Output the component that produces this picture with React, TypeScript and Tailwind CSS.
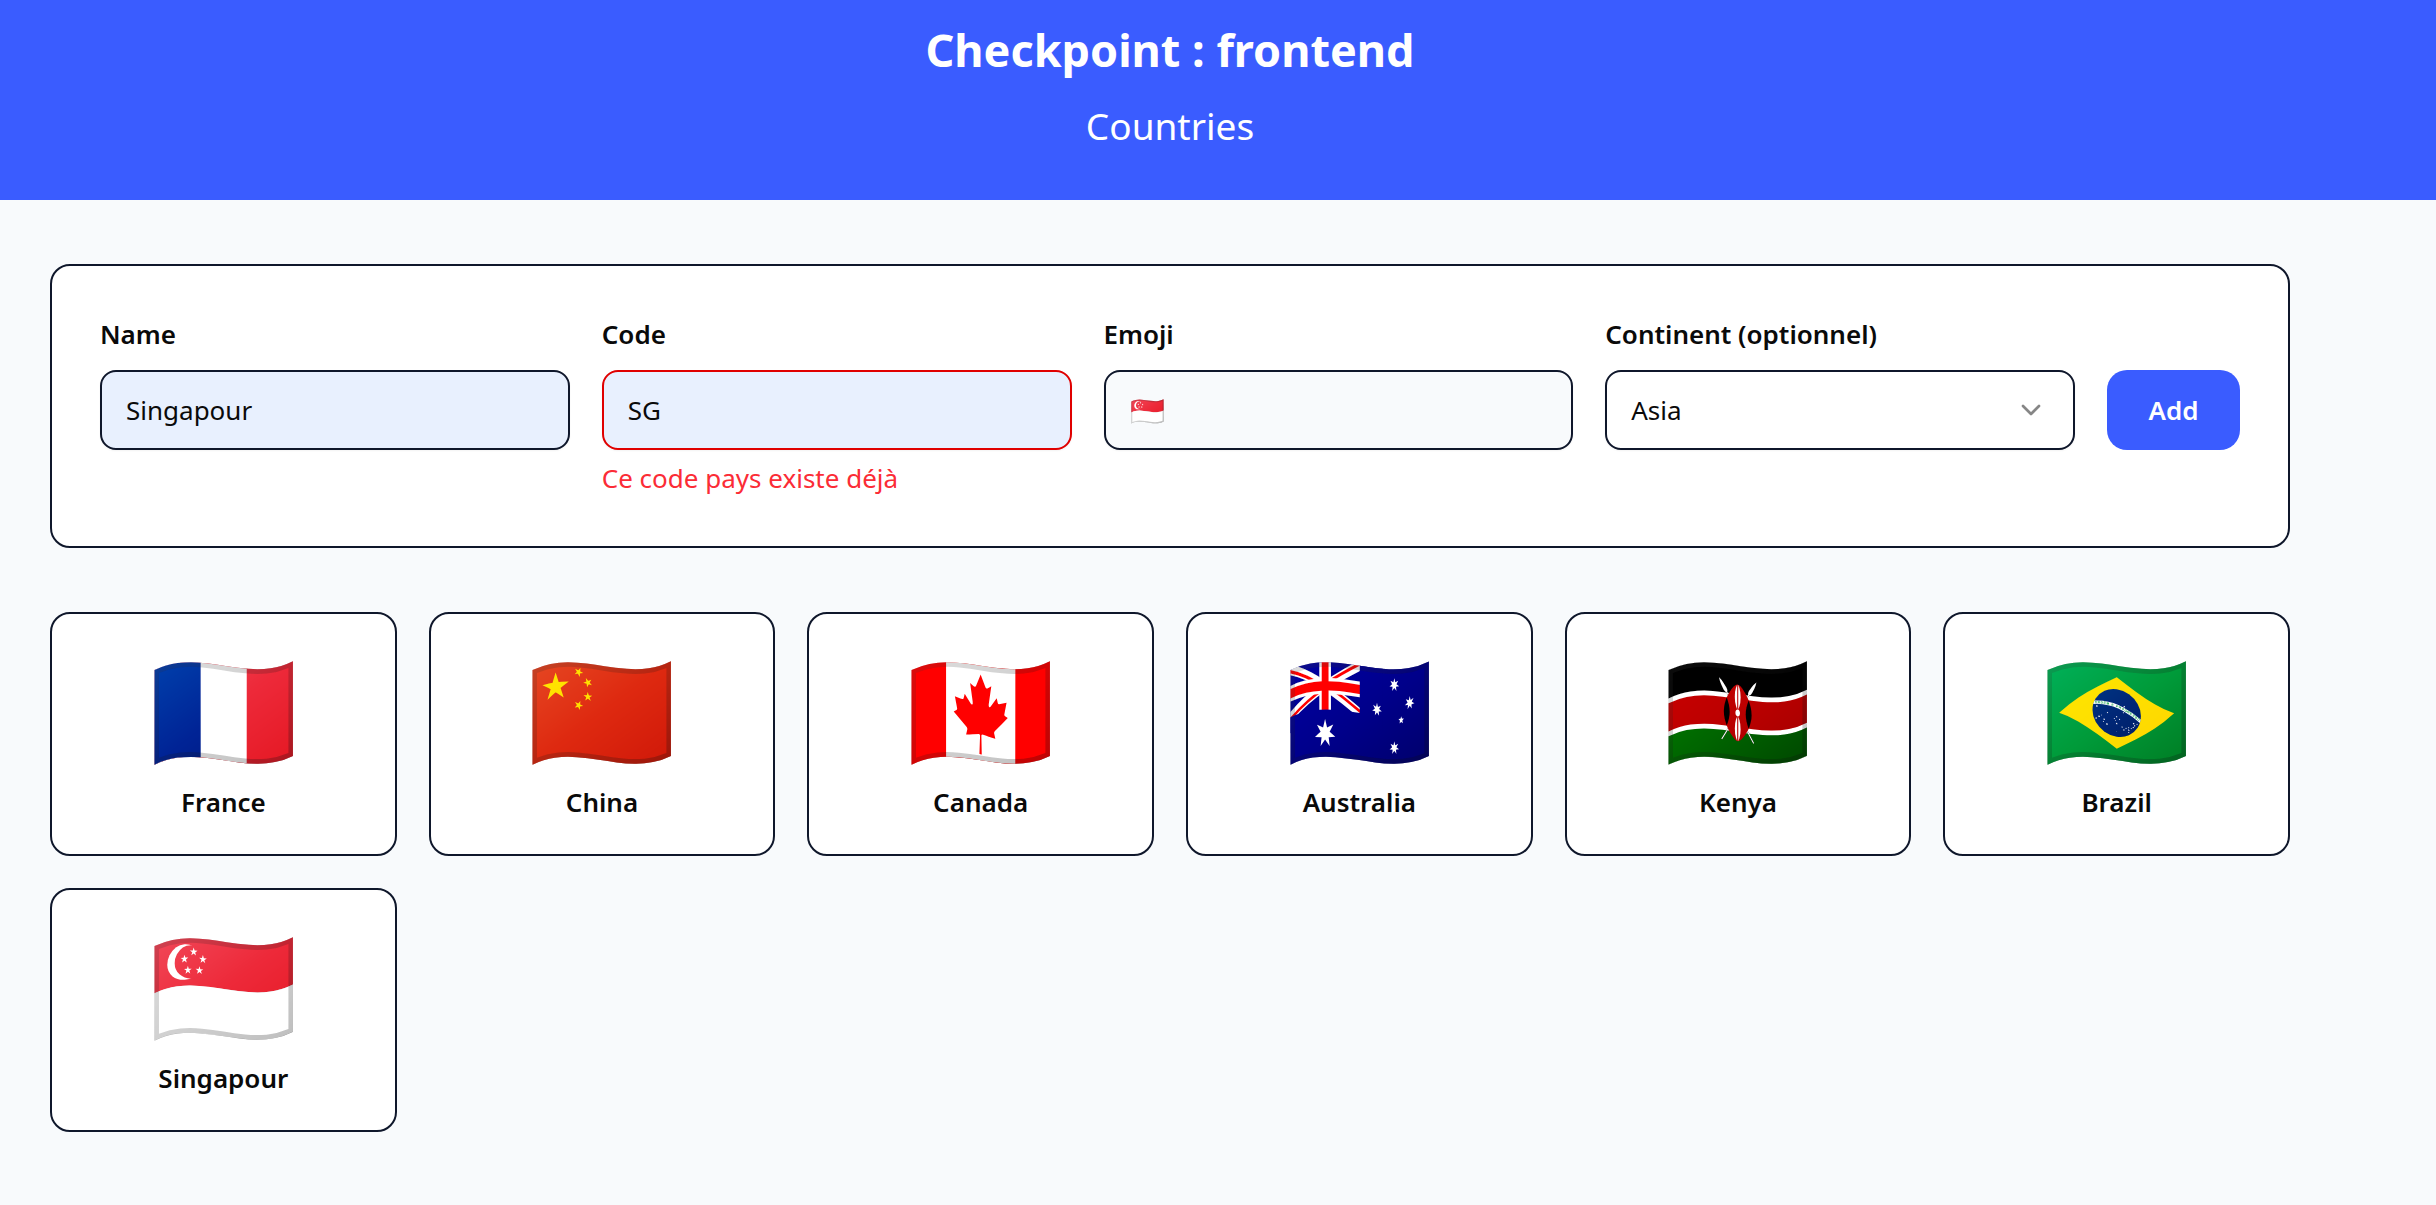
import { useState } from "react";
import type { ReactNode } from "react";
import { ChevronDown } from "lucide-react";

const COUNTRIES = [
  { name: "France", code: "FR", emoji: "🇫🇷" },
  { name: "China", code: "CN", emoji: "🇨🇳" },
  { name: "Canada", code: "CA", emoji: "🇨🇦" },
  { name: "Australia", code: "AU", emoji: "🇦🇺" },
  { name: "Kenya", code: "KE", emoji: "🇰🇪" },
  { name: "Brazil", code: "BR", emoji: "🇧🇷" },
  { name: "Singapour", code: "SG", emoji: "🇸🇬" },
];

const CONTINENTS = ["Africa", "Asia", "Europe", "North America", "Oceania", "South America"];

const CONTROL =
  "block h-20 w-full min-w-0 rounded-2xl border-2 px-6 shadow-xs outline-none focus:ring-4 focus:ring-[#3a5cff]/30";

function Field({ id, label, error, children }: { id: string; label: string; error?: string; children: ReactNode }) {
  return (
    <div className="flex min-w-0 flex-1 flex-col">
      <label htmlFor={id} className="mb-4 font-semibold leading-10">
        {label}
      </label>
      {children}
      {error && (
        <p id={`${id}-error`} className="mt-2 leading-10 text-red-500">
          {error}
        </p>
      )}
    </div>
  );
}

function CountryForm() {
  const [name, setName] = useState("Singapour");
  const [code, setCode] = useState("SG");
  const [emoji, setEmoji] = useState("🇸🇬");
  const [continent, setContinent] = useState("Asia");
  const error = COUNTRIES.some((c) => c.code === code) ? "Ce code pays existe déjà" : undefined;

  return (
    <form
      className="flex items-start gap-8 rounded-[20px] border-2 border-slate-900 bg-white p-12"
      onSubmit={(e) => e.preventDefault()}
    >
      <Field id="name" label="Name">
        <input
          id="name"
          value={name}
          onChange={(e) => setName(e.target.value)}
          className={`${CONTROL} border-slate-900 bg-[#e8f0fe]`}
        />
      </Field>
      <Field id="code" label="Code" error={error}>
        <input
          id="code"
          value={code}
          onChange={(e) => setCode(e.target.value)}
          aria-invalid={Boolean(error)}
          aria-describedby="code-error"
          className={`${CONTROL} border-[#e00000] bg-[#e8f0fe]`}
        />
      </Field>
      <Field id="emoji" label="Emoji">
        <input
          id="emoji"
          value={emoji}
          onChange={(e) => setEmoji(e.target.value)}
          className={`${CONTROL} border-slate-900 bg-slate-50 text-[28px]`}
        />
      </Field>
      <Field id="continent" label="Continent (optionnel)">
        <div className="relative">
          <select
            id="continent"
            value={continent}
            onChange={(e) => setContinent(e.target.value)}
            className={`${CONTROL} appearance-none border-slate-900 bg-white`}
          >
            {CONTINENTS.map((c) => (
              <option key={c}>{c}</option>
            ))}
          </select>
          <ChevronDown
            className="pointer-events-none absolute inset-y-0 right-7 my-auto size-8 text-[#868686]"
            aria-hidden="true"
          />
        </div>
      </Field>
      <button
        type="submit"
        className="mt-14 h-20 min-w-[133px] rounded-[20px] bg-[#3a5cff] px-8 font-semibold text-white"
      >
        Add
      </button>
    </form>
  );
}

function CountryCard({ name, emoji }: { name: string; emoji: string }) {
  return (
    <li className="flex flex-col items-center gap-3 rounded-[20px] border-2 border-slate-900 bg-white py-8">
      <span className="text-[120px] leading-[124px]" aria-hidden="true">
        {emoji}
      </span>
      <span className="font-semibold leading-10">{name}</span>
    </li>
  );
}

export default function App() {
  return (
    <div className="min-h-screen bg-slate-50 font-['Noto_Sans',sans-serif] text-[26px] text-neutral-950">
      <header className="flex flex-col items-center bg-[#3a5cff] pt-[14px] pr-24 pb-[34px] text-white">
        <h1 className="text-[45px] leading-[72px] font-bold">Checkpoint : frontend</h1>
        <p className="text-[37px] leading-[80px]">Countries</p>
      </header>
      <main className="flex flex-col gap-16 py-16 pr-[146px] pl-[50px]">
        <CountryForm />
        <ul className="grid grid-cols-6 gap-8">
          {COUNTRIES.map((c) => (
            <CountryCard key={c.code} name={c.name} emoji={c.emoji} />
          ))}
        </ul>
      </main>
    </div>
  );
}
